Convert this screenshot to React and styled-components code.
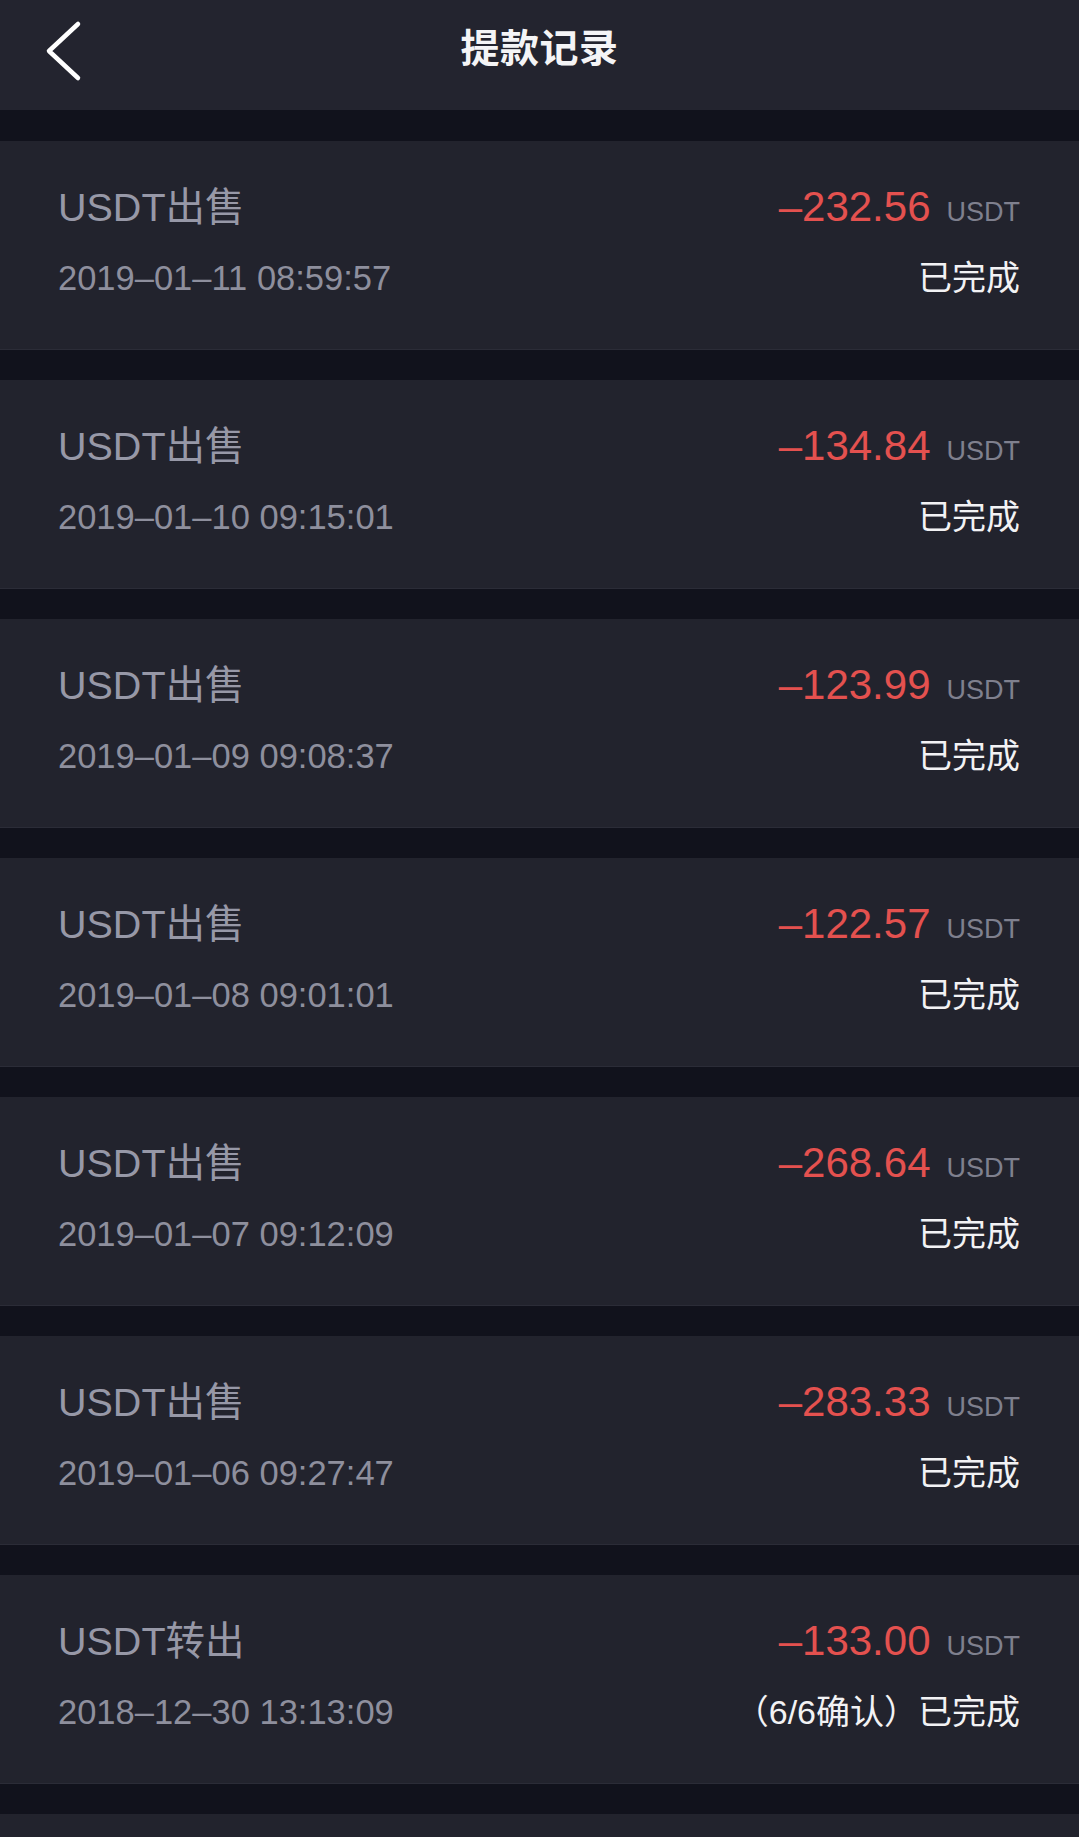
import React from 'react';
import styled, { createGlobalStyle } from 'styled-components';

const GlobalStyle = createGlobalStyle`
  html, body {
    margin: 0;
    padding: 0;
    background-color: #11121c;
  }
  body {
    font-family: "Liberation Sans", "Noto Sans CJK SC", sans-serif;
    -webkit-font-smoothing: antialiased;
  }
`;

const Page = styled.div`
  width: 1079px;
  height: 1837px;
  overflow: hidden;
  background-color: #11121c;
`;

const NavBar = styled.header`
  position: relative;
  height: 110px;
  box-sizing: border-box;
  padding-bottom: 14px;
  background-color: #23242f;
  display: flex;
  align-items: center;
  justify-content: center;
`;

const BackButton = styled.button`
  position: absolute;
  left: 40px;
  top: 18px;
  width: 46px;
  height: 66px;
  padding: 0;
  border: none;
  background: none;
  cursor: pointer;
`;

const NavTitle = styled.h1`
  margin: 0;
  font-size: 39px;
  font-weight: 700;
  color: #f4f4f6;
  letter-spacing: 0.5px;
  line-height: 1;
`;

const RecordList = styled.ul`
  list-style: none;
  margin: 0;
  padding: 31px 0 0;
  display: flex;
  flex-direction: column;
  gap: 30px;
`;

const RecordCard = styled.li`
  height: 209px;
  box-sizing: border-box;
  padding: 44px 59px 0 58px;
  background-color: #22232d;
  border-bottom: 1px solid #2b2c37;
  display: flex;
  flex-direction: column;
  gap: 27px;
`;

const Line = styled.div`
  display: flex;
  justify-content: space-between;
  align-items: baseline;
  height: 44px;
  line-height: 44px;
`;

const Kind = styled.span`
  font-size: 39.5px;
  color: #9798a7;
`;

const Amount = styled.span`
  font-size: 42px;
  color: #e4514f;
`;

const Unit = styled.span`
  font-size: 27px;
  color: #7f808e;
  margin-left: 16px;
`;

const Time = styled.span`
  font-size: 34.5px;
  color: #8e8f9d;
`;

const Status = styled.span`
  font-size: 34px;
  color: #f2f2f4;
`;

const records = [
  { kind: 'USDT出售', amount: '232.56', time: '2019–01–11 08:59:57', status: '已完成' },
  { kind: 'USDT出售', amount: '134.84', time: '2019–01–10 09:15:01', status: '已完成' },
  { kind: 'USDT出售', amount: '123.99', time: '2019–01–09 09:08:37', status: '已完成' },
  { kind: 'USDT出售', amount: '122.57', time: '2019–01–08 09:01:01', status: '已完成' },
  { kind: 'USDT出售', amount: '268.64', time: '2019–01–07 09:12:09', status: '已完成' },
  { kind: 'USDT出售', amount: '283.33', time: '2019–01–06 09:27:47', status: '已完成' },
  { kind: 'USDT转出', amount: '133.00', time: '2018–12–30 13:13:09', status: '（6/6确认）已完成' },
];

const BackIcon = () => (
  <svg width="46" height="66" viewBox="0 0 46 66" fill="none">
    <path
      d="M38 6 L9 33 L38 60"
      stroke="#ffffff"
      strokeWidth="4.5"
      strokeLinecap="round"
      strokeLinejoin="round"
    />
  </svg>
);

const App = () => (
  <Page>
    <GlobalStyle />
    <NavBar>
      <BackButton aria-label="返回">
        <BackIcon />
      </BackButton>
      <NavTitle>提款记录</NavTitle>
    </NavBar>
    <RecordList>
      {records.map((r) => (
        <RecordCard key={r.time}>
          <Line>
            <Kind>{r.kind}</Kind>
            <span>
              <Amount>–{r.amount}</Amount>
              <Unit>USDT</Unit>
            </span>
          </Line>
          <Line>
            <Time>{r.time}</Time>
            <Status>{r.status}</Status>
          </Line>
        </RecordCard>
      ))}
      <RecordCard />
    </RecordList>
  </Page>
);

export default App;
